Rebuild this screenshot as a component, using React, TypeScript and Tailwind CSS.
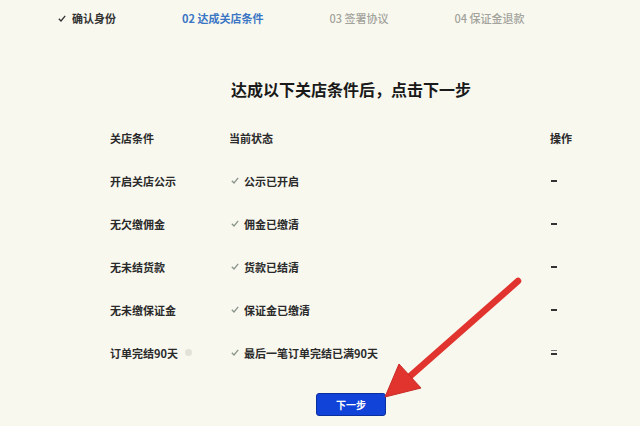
import React from "react";

const steps = [
  { label: "确认身份", state: "done" },
  { label: "02 达成关店条件", state: "active" },
  { label: "03 签署协议", state: "todo" },
  { label: "04 保证金退款", state: "todo" },
];

const rows = [
  { cond: "开启关店公示", status: "公示已开启" },
  { cond: "无欠缴佣金", status: "佣金已缴清" },
  { cond: "无未结货款", status: "货款已结清" },
  { cond: "无未缴保证金", status: "保证金已缴清" },
  { cond: "订单完结90天", status: "最后一笔订单完结已满90天", info: true },
];

function Check({ className }: { className?: string }) {
  return (
    <svg width="8" height="7" viewBox="0 0 8 7" className={className}>
      <polyline points="0.8,3.8 3,6 7.2,0.8" fill="none" stroke="currentColor" strokeWidth="1.3" />
    </svg>
  );
}

export default function App() {
  return (
    <div
      className="relative w-[640px] h-[426px] overflow-hidden bg-[#f8f8ef] text-[#2a2a2a]"
      style={{ fontFamily: '"Noto Sans CJK SC", "Noto Sans", sans-serif' }}
    >
      {/* stepper */}
      <div className="flex items-center gap-[66px] pl-[58px] pt-[10px] text-[11px] leading-[16px]">
        {steps.map((s) => (
          <div
            key={s.label}
            className={
              s.state === "done"
                ? "flex items-center gap-[6px] font-semibold text-[#333]"
                : s.state === "active"
                ? "font-semibold text-[#3b76c4]"
                : "font-medium text-[#a3a39c]"
            }
          >
            {s.state === "done" && <Check className="text-[#333]" />}
            <span>{s.label}</span>
          </div>
        ))}
      </div>

      <div className="ml-[110px] w-[482px]">
        <h1 className="mt-[51px] text-center text-[16px] leading-[24px] font-bold text-[#1a1a1a]">
          达成以下关店条件后，点击下一步
        </h1>

        {/* table */}
        <div className="mt-[15px] grid grid-cols-[119px_321px_1fr] auto-rows-[43px] items-center text-[11px] leading-[16px] font-semibold text-[#2a2a2a]">
          <div>关店条件</div>
          <div>当前状态</div>
          <div className="font-bold">操作</div>
          {rows.map((r, i) => (
            <React.Fragment key={r.cond}>
              <div className="flex items-center gap-[7px]">
                <span>{r.cond}</span>
                {r.info && <span className="w-[7px] h-[7px] rounded-full bg-[#e2e2d8]" />}
              </div>
              <div className="flex items-center gap-[5px] pl-[2px]">
                <Check className="text-[#8a958a]" />
                <span>{r.status}</span>
              </div>
              <div className="flex flex-col pl-[1px]">
                {i === rows.length - 1 && <span className="w-[6px] h-[1px] bg-[#777] mb-[2px]" />}
                <span className="w-[6px] h-[2px] bg-[#333]" />
              </div>
            </React.Fragment>
          ))}
        </div>

        <div className="mt-[19px] flex justify-center">
          <button className="w-[70px] h-[23px] rounded-[3px] border border-[#0b2f9e] bg-[#1243d8] text-white text-[10px] leading-none font-semibold">
            下一步
          </button>
        </div>
      </div>

      {/* red annotation arrow */}
      <svg className="absolute left-0 top-0 pointer-events-none" width="640" height="426" viewBox="0 0 640 426">
        <line x1="518" y1="281" x2="408" y2="378" stroke="#e1342f" strokeWidth="6.5" strokeLinecap="round" />
        <polygon points="385,397 399,364 421,388" fill="#e1342f" stroke="#c92a26" strokeWidth="1" strokeLinejoin="round" />
      </svg>
    </div>
  );
}
